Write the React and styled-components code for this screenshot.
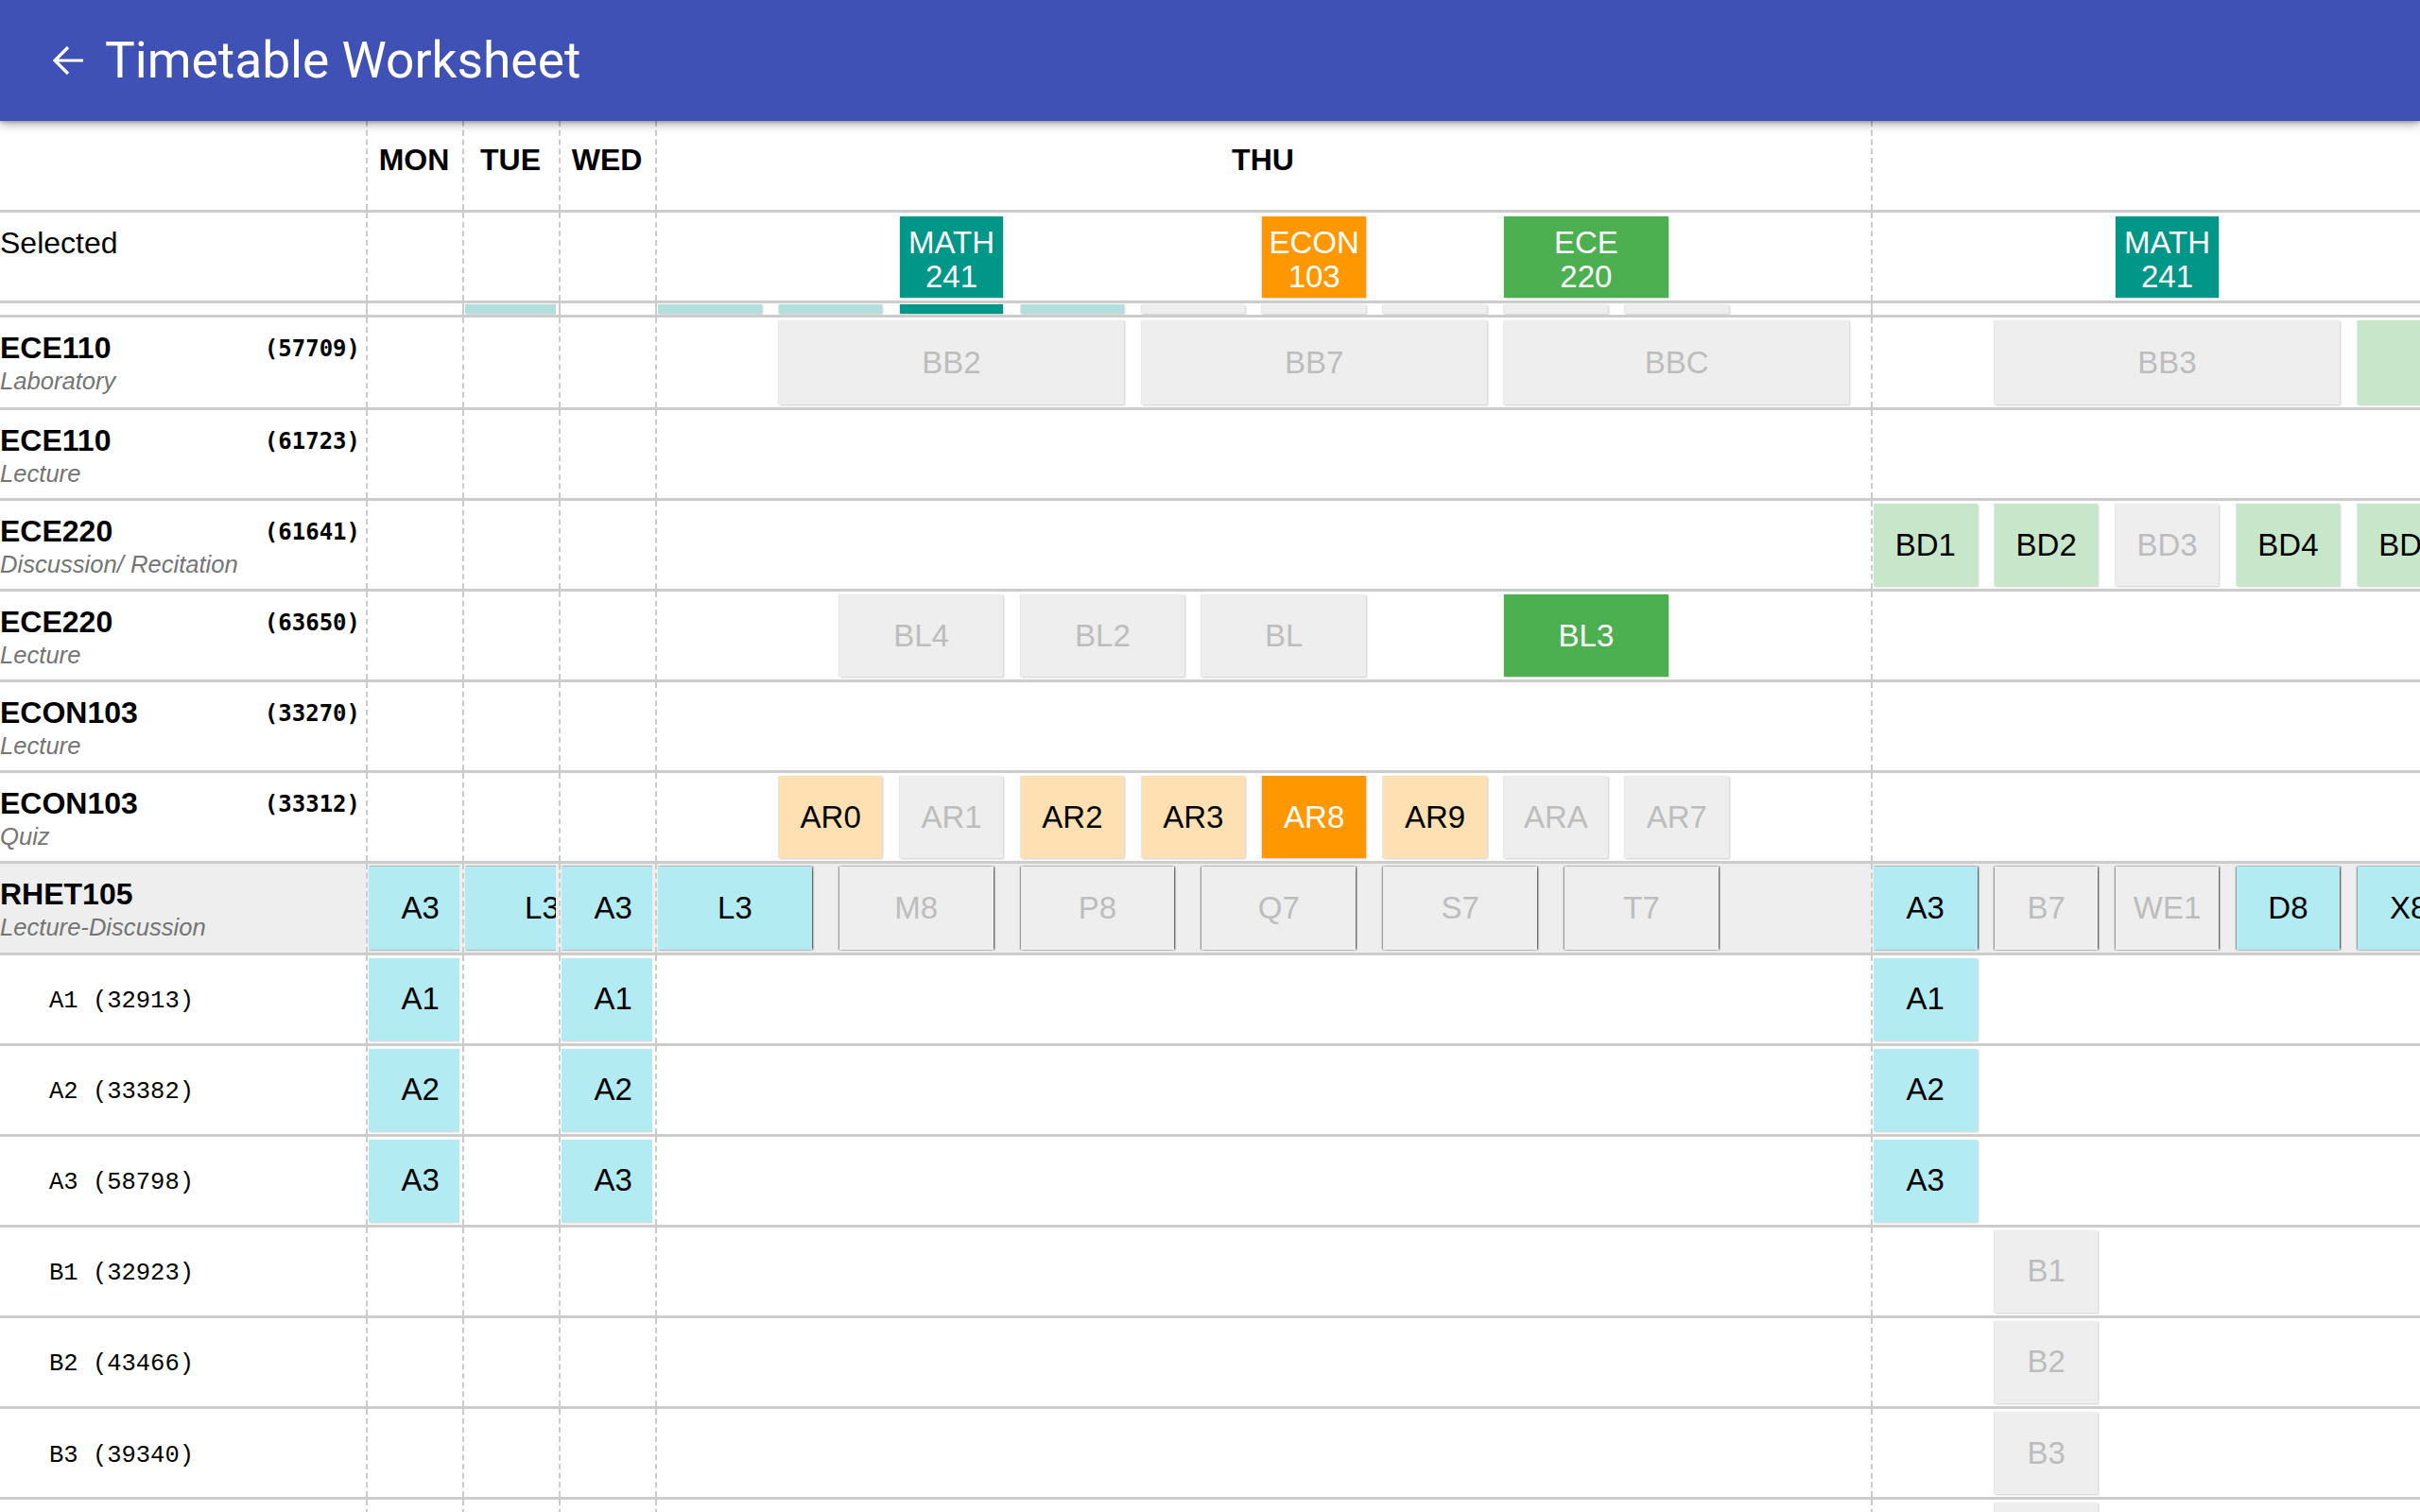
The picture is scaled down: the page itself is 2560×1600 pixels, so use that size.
import React from 'react';
import styled, { createGlobalStyle } from 'styled-components';

const HOUR = 128;

const DAYS = [
  { name: 'MON', width: 102 },
  { name: 'TUE', width: 102 },
  { name: 'WED', width: 102 },
  { name: 'THU', width: 1286 },
  { name: 'FRI', width: 1286 },
];

const tones = {
  cyan: { bg: '#b2ebf2', fg: '#000' },
  tealLight: { bg: '#b2dfdb', fg: '#000' },
  teal: { bg: '#009688', fg: '#fff' },
  orangeLight: { bg: '#ffe0b2', fg: '#000' },
  orange: { bg: '#ff9800', fg: '#fff' },
  greenLight: { bg: '#c8e6c9', fg: '#000' },
  green: { bg: '#4caf50', fg: '#fff' },
  gray: { bg: '#eeeeee', fg: '#bdbdbd' },
};

// label, start (minutes from day start), duration, tone
const s = (label, start, dur, tone) => ({ lines: label ? label.split(' ') : [], start, dur, tone });

const selected = {
  3: [s('MATH 241', 120, 50, 'teal'), s('ECON 103', 300, 50, 'orange'), s('ECE 220', 420, 80, 'green')],
  4: [s('MATH 241', 120, 50, 'teal')],
};

const strip = {
  1: [s('', 0, 50, 'tealLight')],
  3: [
    s('', 0, 50, 'tealLight'), s('', 60, 50, 'tealLight'), s('', 120, 50, 'teal'),
    s('', 180, 50, 'tealLight'), s('', 240, 50, 'gray'), s('', 300, 50, 'gray'),
    s('', 360, 50, 'gray'), s('', 420, 50, 'gray'), s('', 480, 50, 'gray'),
  ],
};

const courses = [
  {
    code: 'ECE110', crn: '(57709)', type: 'Laboratory', first: true,
    cells: {
      3: [s('BB2', 60, 170, 'gray'), s('BB7', 240, 170, 'gray'), s('BBC', 420, 170, 'gray')],
      4: [s('BB3', 60, 170, 'gray'), s('BB4', 240, 170, 'greenLight')],
    },
  },
  { code: 'ECE110', crn: '(61723)', type: 'Lecture', cells: {} },
  {
    code: 'ECE220', crn: '(61641)', type: 'Discussion/ Recitation',
    cells: {
      4: [
        s('BD1', 0, 50, 'greenLight'), s('BD2', 60, 50, 'greenLight'), s('BD3', 120, 50, 'gray'),
        s('BD4', 180, 50, 'greenLight'), s('BD5', 240, 50, 'greenLight'),
      ],
    },
  },
  {
    code: 'ECE220', crn: '(63650)', type: 'Lecture',
    cells: {
      3: [s('BL4', 90, 80, 'gray'), s('BL2', 180, 80, 'gray'), s('BL', 270, 80, 'gray'), s('BL3', 420, 80, 'green')],
    },
  },
  { code: 'ECON103', crn: '(33270)', type: 'Lecture', cells: {} },
  {
    code: 'ECON103', crn: '(33312)', type: 'Quiz',
    cells: {
      3: [
        s('AR0', 60, 50, 'orangeLight'), s('AR1', 120, 50, 'gray'), s('AR2', 180, 50, 'orangeLight'),
        s('AR3', 240, 50, 'orangeLight'), s('AR8', 300, 50, 'orange'), s('AR9', 360, 50, 'orangeLight'),
        s('ARA', 420, 50, 'gray'), s('AR7', 480, 50, 'gray'),
      ],
    },
  },
  {
    code: 'RHET105', crn: '', type: 'Lecture-Discussion', active: true,
    cells: {
      0: [s('A3', 0, 50, 'cyan')],
      1: [s('L3', 0, 75, 'cyan')],
      2: [s('A3', 0, 50, 'cyan')],
      3: [
        s('L3', 0, 75, 'cyan'), s('M8', 90, 75, 'gray'), s('P8', 180, 75, 'gray'),
        s('Q7', 270, 75, 'gray'), s('S7', 360, 75, 'gray'), s('T7', 450, 75, 'gray'),
      ],
      4: [
        s('A3', 0, 50, 'cyan'), s('B7', 60, 50, 'gray'), s('WE1', 120, 50, 'gray'),
        s('D8', 180, 50, 'cyan'), s('X8', 240, 50, 'cyan'),
      ],
    },
  },
];

const aRow = (name) => ({ 0: [s(name, 0, 50, 'cyan')], 2: [s(name, 0, 50, 'cyan')], 4: [s(name, 0, 50, 'cyan')] });
const bRow = (name) => ({ 4: [s(name, 60, 50, 'gray')] });

const sections = [
  { label: 'A1 (32913)', cells: aRow('A1') },
  { label: 'A2 (33382)', cells: aRow('A2') },
  { label: 'A3 (58798)', cells: aRow('A3') },
  { label: 'B1 (32923)', cells: bRow('B1') },
  { label: 'B2 (43466)', cells: bRow('B2') },
  { label: 'B3 (39340)', cells: bRow('B3') },
  { label: 'B4 (39352)', cells: bRow('B4') },
];

function DayTracks({ cells, top, bottom, strong, lift }) {
  return DAYS.map((d, i) => (
    <DayCell key={d.name} $w={d.width}>
      <Track $top={top} $bottom={bottom}>
        {(cells[i] || []).map((b, j) => (
          <Block
            key={j}
            $tone={b.tone}
            $strong={strong}
            $lift={lift}
            style={{ gridColumn: `${b.start / 5 + 1} / span ${b.dur / 5}` }}
          >
            {b.lines.map((l) => <span key={l}>{l}</span>)}
          </Block>
        ))}
      </Track>
    </DayCell>
  ));
}

export default function App() {
  return (
    <>
      <GlobalStyle />
      <AppBar>
        <BackIcon viewBox="0 0 34 32" aria-hidden="true">
          <path d="M33 16H3M17 2L3 16l14 14" />
        </BackIcon>
        <Title>Timetable Worksheet</Title>
      </AppBar>

      <Sheet>
        <Row $h={97}>
          <LabelCell />
          {DAYS.map((d) => (
            <DayCell key={d.name} $w={d.width}>
              <DayName>{d.name}</DayName>
            </DayCell>
          ))}
        </Row>

        <Row $h={96}>
          <LabelCell>
            <Plain>Selected</Plain>
          </LabelCell>
          <DayTracks cells={selected} top={4} bottom={3} lift={5} />
        </Row>

        <Row $h={15}>
          <LabelCell />
          <DayTracks cells={strip} top={1} bottom={1} />
        </Row>

        {courses.map((c, i) => (
          <Row key={i} $h={c.first ? 98 : 96.1} $active={c.active}>
            <LabelCell>
              <TitleLine>
                <Code>{c.code}</Code>
                <Crn>{c.crn}</Crn>
              </TitleLine>
              <Kind>{c.type}</Kind>
            </LabelCell>
            <DayTracks cells={c.cells} top={3} bottom={3} strong={c.active} />
          </Row>
        ))}

        {sections.map((r) => (
          <Row key={r.label} $h={96.1}>
            <LabelCell $sub>
              <SubLabel>{r.label}</SubLabel>
            </LabelCell>
            <DayTracks cells={r.cells} top={3} bottom={3} />
          </Row>
        ))}
      </Sheet>
    </>
  );
}

const GlobalStyle = createGlobalStyle`
  html, body {
    margin: 0;
    padding: 0;
    overflow: hidden;
    background: #fff;
  }
  body {
    font-family: "Liberation Sans", Arial, sans-serif;
    color: #000;
  }
  * {
    box-sizing: border-box;
  }
`;

const AppBar = styled.header`
  position: relative;
  z-index: 2;
  height: 128px;
  display: flex;
  align-items: center;
  background: #3f51b5;
  box-shadow: 0 4px 10px rgba(0, 0, 0, 0.28), 0 2px 3px rgba(0, 0, 0, 0.18);
`;

const BackIcon = styled.svg`
  width: 34px;
  height: 32px;
  margin-left: 55px;
  fill: none;
  stroke: #fff;
  stroke-width: 3.2;
`;

const Title = styled.h1`
  margin: 0 0 0 22px;
  font-family: Roboto, "Liberation Sans", sans-serif;
  font-weight: 400;
  font-size: 53.3px;
  color: #fff;
`;

const Sheet = styled.div`
  width: 100%;
  overflow: hidden;
`;

const Row = styled.div`
  display: flex;
  width: max-content;
  height: ${(p) => p.$h}px;
  border-bottom: 3px solid #cccccc;
  background: ${(p) => (p.$active ? '#eeeeee' : '#fff')};
`;

const LabelCell = styled.div`
  flex: 0 0 387px;
  display: flex;
  flex-direction: column;
  justify-content: ${(p) => (p.$sub ? 'center' : 'flex-start')};
  padding: ${(p) => (p.$sub ? '5px 8px 0 52px' : '15px 6px 0 0')};
`;

const Plain = styled.div`
  font-size: 32px;
  line-height: 35px;
`;

const TitleLine = styled.div`
  display: flex;
  align-items: flex-start;
`;

const Code = styled.div`
  font-size: 32px;
  line-height: 35px;
  font-weight: 700;
`;

const Crn = styled.div`
  margin-left: auto;
  margin-top: 4px;
  font-family: "DejaVu Sans Mono", "Liberation Mono", monospace;
  font-weight: 700;
  font-size: 24px;
  line-height: 28px;
`;

const Kind = styled.div`
  margin-top: 3px;
  font-size: 25.6px;
  line-height: 29px;
  font-style: italic;
  color: #757575;
  white-space: nowrap;
`;

const SubLabel = styled.div`
  font-family: "Liberation Mono", "DejaVu Sans Mono", monospace;
  font-size: 25.5px;
  white-space: pre;
`;

const DayCell = styled.div`
  flex: 0 0 ${(p) => p.$w}px;
  width: ${(p) => p.$w}px;
  min-width: 0;
  overflow: hidden;
  display: flex;
  border-left: 2px dashed #cccccc;
  padding: 0 3px 0 1px;
`;

const DayName = styled.div`
  flex: 1;
  padding-top: 24px;
  text-align: center;
  font-size: 32px;
  line-height: 35px;
  font-weight: 700;
`;

const Track = styled.div`
  flex: 1;
  min-width: 0;
  overflow: hidden;
  display: grid;
  grid-template-columns: repeat(120, ${HOUR / 12}px);
  grid-template-rows: minmax(0, 1fr);
  padding: ${(p) => p.$top}px 0 ${(p) => p.$bottom}px;
`;

const Block = styled.div`
  grid-row: 1;
  margin-right: -3px;
  padding-top: ${(p) => p.$lift || 0}px;
  display: flex;
  flex-direction: column;
  align-items: center;
  justify-content: center;
  overflow: hidden;
  white-space: nowrap;
  font-size: 33px;
  line-height: 36px;
  background: ${(p) => tones[p.$tone].bg};
  color: ${(p) => tones[p.$tone].fg};
  box-shadow: ${(p) =>
    p.$strong
      ? '-1.5px 0 1.5px rgba(0,0,0,0.55), 1.5px 0 1.5px rgba(0,0,0,0.55)'
      : '1px 1px 2px rgba(0,0,0,0.2), -1px 0 1px rgba(0,0,0,0.08)'};
`;
